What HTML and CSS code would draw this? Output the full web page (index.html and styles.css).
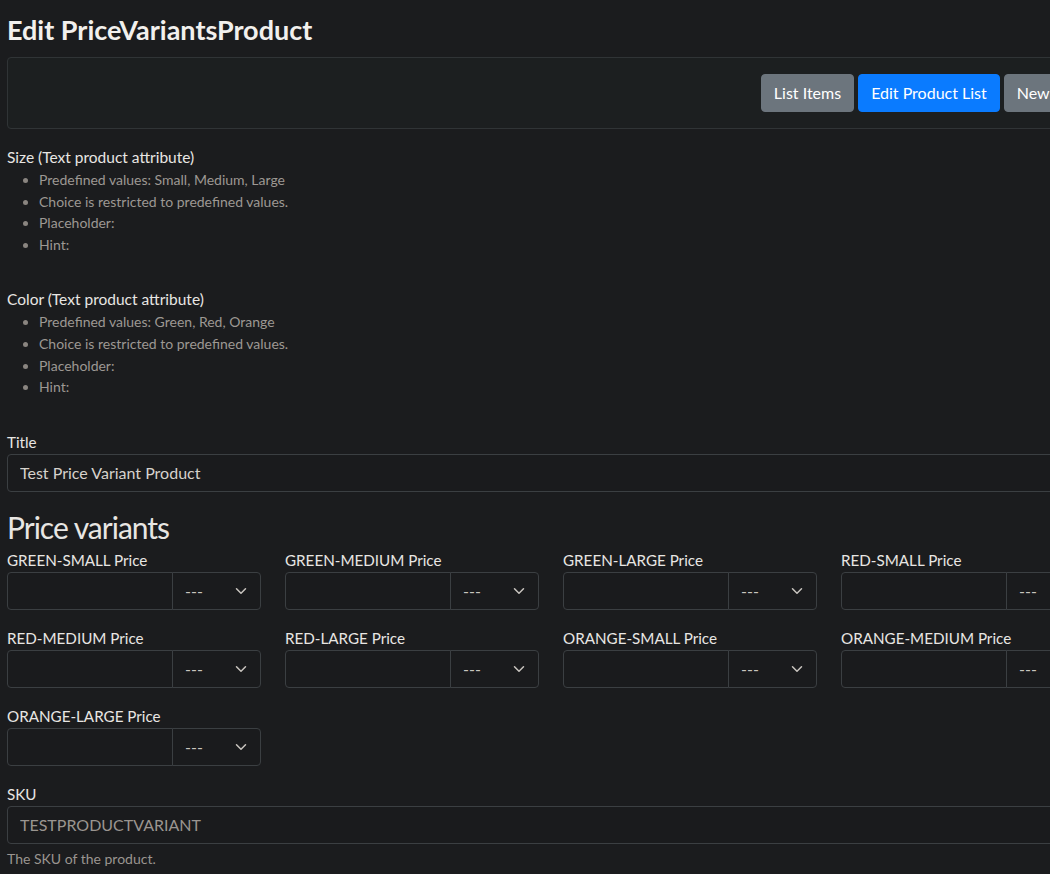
FILE: index.html
```html
<!DOCTYPE html>
<html lang="en">
<head>
<meta charset="utf-8">
<title>Edit PriceVariantsProduct</title>
<link rel="stylesheet" href="styles.css">
</head>
<body>
<main class="page">
  <h1 class="page-title">Edit PriceVariantsProduct</h1>

  <nav class="toolbar">
    <a class="btn btn-secondary" href="#">List Items</a>
    <a class="btn btn-primary" href="#">Edit Product List</a>
    <a class="btn btn-secondary" href="#">New Item</a>
  </nav>

  <section class="attr">
    <div class="attr-name">Size (Text product attribute)</div>
    <ul class="attr-list">
      <li>Predefined values: Small, Medium, Large</li>
      <li>Choice is restricted to predefined values.</li>
      <li>Placeholder:</li>
      <li>Hint:</li>
    </ul>
  </section>

  <section class="attr">
    <div class="attr-name">Color (Text product attribute)</div>
    <ul class="attr-list">
      <li>Predefined values: Green, Red, Orange</li>
      <li>Choice is restricted to predefined values.</li>
      <li>Placeholder:</li>
      <li>Hint:</li>
    </ul>
  </section>

  <div class="field">
    <label class="label" for="title">Title</label>
    <input class="input" id="title" type="text" value="Test Price Variant Product">
  </div>

  <h2 class="section-title">Price variants</h2>

  <div class="price-grid">
    <div class="field">
      <label class="label">GREEN-SMALL Price</label>
      <div class="input-group">
        <input class="input" type="text">
        <div class="select-wrap"><select class="select"><option>---</option></select><svg class="chev" viewBox="0 0 16 16" width="16" height="12"><path d="M2 5l6 6 6-6" fill="none" stroke="currentColor" stroke-width="2" stroke-linecap="round" stroke-linejoin="round"/></svg></div>
      </div>
    </div>
    <div class="field">
      <label class="label">GREEN-MEDIUM Price</label>
      <div class="input-group">
        <input class="input" type="text">
        <div class="select-wrap"><select class="select"><option>---</option></select><svg class="chev" viewBox="0 0 16 16" width="16" height="12"><path d="M2 5l6 6 6-6" fill="none" stroke="currentColor" stroke-width="2" stroke-linecap="round" stroke-linejoin="round"/></svg></div>
      </div>
    </div>
    <div class="field">
      <label class="label">GREEN-LARGE Price</label>
      <div class="input-group">
        <input class="input" type="text">
        <div class="select-wrap"><select class="select"><option>---</option></select><svg class="chev" viewBox="0 0 16 16" width="16" height="12"><path d="M2 5l6 6 6-6" fill="none" stroke="currentColor" stroke-width="2" stroke-linecap="round" stroke-linejoin="round"/></svg></div>
      </div>
    </div>
    <div class="field">
      <label class="label">RED-SMALL Price</label>
      <div class="input-group">
        <input class="input" type="text">
        <div class="select-wrap"><select class="select"><option>---</option></select><svg class="chev" viewBox="0 0 16 16" width="16" height="12"><path d="M2 5l6 6 6-6" fill="none" stroke="currentColor" stroke-width="2" stroke-linecap="round" stroke-linejoin="round"/></svg></div>
      </div>
    </div>
    <div class="field">
      <label class="label">RED-MEDIUM Price</label>
      <div class="input-group">
        <input class="input" type="text">
        <div class="select-wrap"><select class="select"><option>---</option></select><svg class="chev" viewBox="0 0 16 16" width="16" height="12"><path d="M2 5l6 6 6-6" fill="none" stroke="currentColor" stroke-width="2" stroke-linecap="round" stroke-linejoin="round"/></svg></div>
      </div>
    </div>
    <div class="field">
      <label class="label">RED-LARGE Price</label>
      <div class="input-group">
        <input class="input" type="text">
        <div class="select-wrap"><select class="select"><option>---</option></select><svg class="chev" viewBox="0 0 16 16" width="16" height="12"><path d="M2 5l6 6 6-6" fill="none" stroke="currentColor" stroke-width="2" stroke-linecap="round" stroke-linejoin="round"/></svg></div>
      </div>
    </div>
    <div class="field">
      <label class="label">ORANGE-SMALL Price</label>
      <div class="input-group">
        <input class="input" type="text">
        <div class="select-wrap"><select class="select"><option>---</option></select><svg class="chev" viewBox="0 0 16 16" width="16" height="12"><path d="M2 5l6 6 6-6" fill="none" stroke="currentColor" stroke-width="2" stroke-linecap="round" stroke-linejoin="round"/></svg></div>
      </div>
    </div>
    <div class="field">
      <label class="label">ORANGE-MEDIUM Price</label>
      <div class="input-group">
        <input class="input" type="text">
        <div class="select-wrap"><select class="select"><option>---</option></select><svg class="chev" viewBox="0 0 16 16" width="16" height="12"><path d="M2 5l6 6 6-6" fill="none" stroke="currentColor" stroke-width="2" stroke-linecap="round" stroke-linejoin="round"/></svg></div>
      </div>
    </div>
    <div class="field">
      <label class="label">ORANGE-LARGE Price</label>
      <div class="input-group">
        <input class="input" type="text">
        <div class="select-wrap"><select class="select"><option>---</option></select><svg class="chev" viewBox="0 0 16 16" width="16" height="12"><path d="M2 5l6 6 6-6" fill="none" stroke="currentColor" stroke-width="2" stroke-linecap="round" stroke-linejoin="round"/></svg></div>
      </div>
    </div>
  </div>

  <div class="field">
    <label class="label" for="sku">SKU</label>
    <input class="input input-readonly" id="sku" type="text" value="TESTPRODUCTVARIANT" readonly>
    <div class="help">The SKU of the product.</div>
  </div>
</main>
</body>
</html>
```

FILE: styles.css
```css
html {
  overflow: hidden;
}

body {
  margin: 0;
  background: #1b1c1e;
  color: #e8e6e3;
  font-family: Lato, "Noto Sans", sans-serif;
  font-size: 16px;
  line-height: 1.5;
}

.page {
  width: 1108px;
  padding: 0 7px;
}

.page-title {
  margin: 0;
  padding-top: 12px;
  padding-bottom: 9px;
  font-size: 27px;
  font-weight: 700;
  line-height: 36px;
  color: #f2f0ed;
}

.toolbar {
  display: flex;
  justify-content: flex-end;
  gap: 4px;
  padding: 16px;
  border: 1px solid #303436;
  border-radius: 4px;
  background: #1c1f20;
  margin-bottom: 16px;
}

.btn {
  display: inline-block;
  padding: 6px 12px;
  border: 1px solid transparent;
  border-radius: 4px;
  font-size: 16px;
  line-height: 24px;
  color: #ffffff;
  text-decoration: none;
  white-space: nowrap;
}

.btn-secondary {
  background: #6c757d;
  border-color: #6c757d;
}

.btn-primary {
  background: #0a7bff;
  border-color: #0a7bff;
}

.attr {
  margin-bottom: 32px;
}

.attr-name {
  font-size: 15.5px;
  line-height: 24px;
}

.attr-list {
  margin: 0;
  padding-left: 32px;
  color: #9d9893;
  font-size: 14px;
  line-height: 21.6px;
}

.attr-list li::marker {
  color: #8a8580;
}

.field {
  margin-bottom: 16px;
}

.label {
  display: block;
  font-size: 15.2px;
  line-height: 24px;
}

.input {
  display: block;
  box-sizing: border-box;
  width: 100%;
  height: 38px;
  padding: 6px 12px;
  border: 1px solid #3b3f42;
  border-radius: 4px;
  background: #1a1b1d;
  color: #d6d2cc;
  font-family: inherit;
  font-size: 16px;
  line-height: 24px;
  outline: none;
}

.input-readonly {
  color: #9a9590;
}

.section-title {
  margin: 0;
  padding-bottom: 2px;
  font-size: 30px;
  font-weight: 400;
  line-height: 38px;
  letter-spacing: -1px;
}

.price-grid {
  display: grid;
  width: 1088px;
  grid-template-columns: repeat(4, 254px);
  column-gap: 24px;
}

.input-group {
  display: flex;
}

.input-group .input {
  flex: 1;
  min-width: 0;
  border-radius: 4px 0 0 4px;
}

.select-wrap {
  position: relative;
  width: 89px;
  margin-left: -1px;
  flex: none;
}

.select {
  display: block;
  box-sizing: border-box;
  width: 100%;
  height: 38px;
  padding: 6px 36px 6px 12px;
  border: 1px solid #3b3f42;
  border-radius: 0 4px 4px 0;
  background: #1a1b1d;
  color: #c9c5bf;
  font-family: inherit;
  font-size: 16px;
  line-height: 24px;
  appearance: none;
  -webkit-appearance: none;
  outline: none;
}

.chev {
  position: absolute;
  right: 12px;
  top: 13px;
  color: #c9c5bf;
  pointer-events: none;
}

.help {
  margin-top: 4px;
  font-size: 14px;
  line-height: 21.6px;
  color: #9a9590;
}
```
